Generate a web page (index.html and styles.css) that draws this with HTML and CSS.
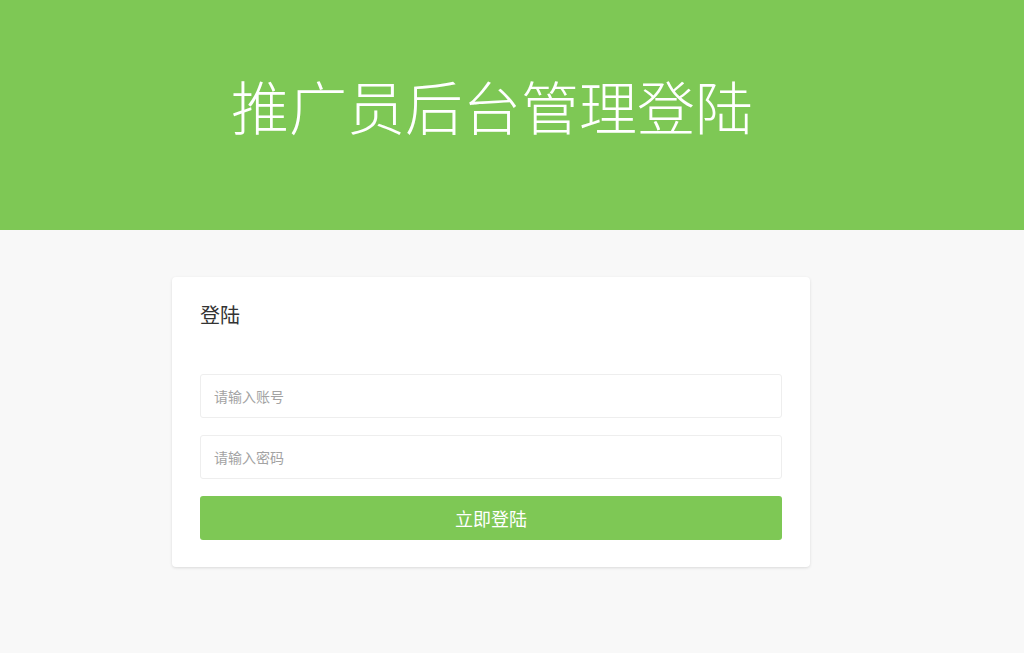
FILE: index.html
```html
<!DOCTYPE html>
<html lang="zh-CN">
<head>
<meta charset="utf-8">
<title>推广员后台管理登陆</title>
<link rel="stylesheet" href="styles.css">
</head>
<body>
<header class="banner">
  <h1 class="banner-title">推广员后台管理登陆</h1>
</header>
<main class="main">
  <section class="card">
    <h2 class="card-title">登陆</h2>
    <form class="form">
      <input class="field" type="text" placeholder="请输入账号">
      <input class="field" type="password" placeholder="请输入密码">
      <button class="submit" type="button">立即登陆</button>
    </form>
  </section>
</main>
</body>
</html>
```
FILE: styles.css
```css
* { box-sizing: border-box; }
html, body {
  margin: 0;
  padding: 0;
  height: 100%;
}
body {
  background: #f8f8f8;
  font-family: "Noto Sans CJK SC", "Noto Sans", sans-serif;
  color: #333;
}
.banner {
  background: #7ec855;
  height: 230px;
  display: flex;
  justify-content: center;
  align-items: center;
}
.banner-title {
  margin: 0 0 20px 0;
  color: #fff;
  font-size: 58px;
  font-weight: 300;
  line-height: 1;
  letter-spacing: 0;
  padding-right: 40px;
}
.main {
  padding-top: 47px;
  padding-left: 172px;
}
.card {
  width: 638px;
  background: #fff;
  border-radius: 4px;
  box-shadow: 0 1px 3px rgba(0, 0, 0, 0.12);
  padding: 25px 28px 27px 28px;
}
.card-title {
  margin: 0 0 46px 0;
  font-size: 20px;
  font-weight: 400;
  line-height: 26px;
  color: #333;
}
.form {
  display: flex;
  flex-direction: column;
  gap: 17px;
  width: 582px;
}
.field {
  height: 44px;
  border: 1px solid #eeeeee;
  border-radius: 3px;
  padding: 0 13px;
  font-family: "Noto Sans CJK SC", sans-serif;
  font-size: 14px;
  color: #333;
  background: #fff;
  outline: none;
}
.field::placeholder {
  color: #a3a3a3;
}
.submit {
  height: 44px;
  border: none;
  border-radius: 3px;
  background: #7ec855;
  color: #fff;
  font-family: "Noto Sans CJK SC", sans-serif;
  font-size: 18px;
  line-height: 44px;
  padding: 0 0 2px 0;
  cursor: pointer;
}
```
